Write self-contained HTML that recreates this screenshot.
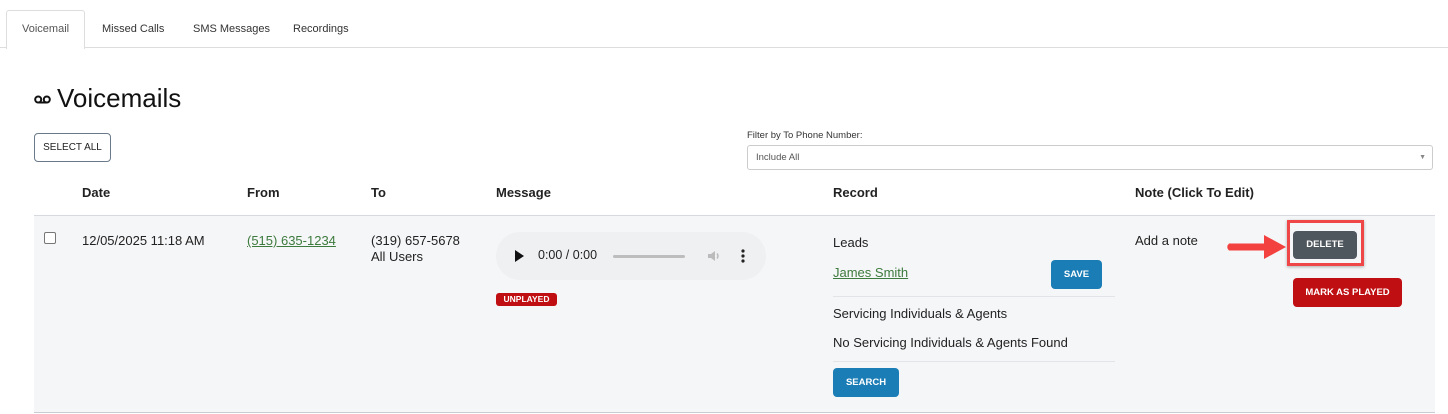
<!DOCTYPE html>
<html><head><style>
body{margin:0;width:1448px;height:414px;background:#fff;font-family:"Liberation Sans",sans-serif;color:#222;position:relative;overflow:hidden}
.a{position:absolute;white-space:nowrap}
.tab{font-size:11px;top:23px;color:#333}
.btn{position:absolute;border-radius:4px;color:#fff;font-weight:bold;font-size:9.5px;text-align:center}
.th{top:185px;font-size:13px;font-weight:bold;color:#222}
.td{font-size:13px;color:#222}
</style></head><body>
<div class="a" style="left:6px;top:10px;width:77px;height:38px;border:1px solid #ddd;border-bottom:none;border-radius:3px 3px 0 0;background:#fff"></div>
<div class="a" style="left:84px;top:47px;width:1364px;border-top:1px solid #ddd"></div>
<div class="a" style="left:0;top:47px;width:6px;border-top:1px solid #ddd"></div>
<div class="a tab" style="left:22px;color:#555">Voicemail</div>
<div class="a tab" style="left:102px">Missed Calls</div>
<div class="a tab" style="left:193px">SMS Messages</div>
<div class="a tab" style="left:293px">Recordings</div>

<svg class="a" style="left:34px;top:95px" width="17" height="9" viewBox="0 0 17 9"><circle cx="4.2" cy="4.5" r="3" fill="none" stroke="#111" stroke-width="2"/><circle cx="12.8" cy="4.5" r="3" fill="none" stroke="#111" stroke-width="2"/><line x1="4.2" y1="7.5" x2="12.8" y2="7.5" stroke="#111" stroke-width="2"/></svg>
<div class="a" style="left:57px;top:83px;font-size:26px;color:#111">Voicemails</div>

<div class="a" style="left:34px;top:133px;width:75px;height:27px;border:1px solid #6a7a8a;border-radius:4px;font-size:10px;line-height:27px;text-align:center;color:#222">SELECT ALL</div>

<div class="a" style="left:747px;top:130px;font-size:9.5px;color:#333">Filter by To Phone Number:</div>
<div class="a" style="left:747px;top:145px;width:684px;height:23px;border:1px solid #ccc;border-radius:3px;font-size:9.5px;line-height:23px;color:#555"><span style="margin-left:8px">Include All</span><span style="position:absolute;right:6px;font-size:7px;color:#888">▼</span></div>

<div class="a th" style="left:82px">Date</div>
<div class="a th" style="left:247px">From</div>
<div class="a th" style="left:371px">To</div>
<div class="a th" style="left:496px">Message</div>
<div class="a th" style="left:833px">Record</div>
<div class="a th" style="left:1135px">Note (Click To Edit)</div>

<div class="a" style="left:34px;top:215px;width:1401px;height:196px;background:#f5f6f8;border-top:1px solid #d6d9de;border-bottom:1px solid #c9ccd2"></div>
<div class="a" style="left:44px;top:232px;width:10px;height:10px;border:1px solid #777;border-radius:2px;background:#fff"></div>
<div class="a td" style="left:82px;top:233px">12/05/2025 11:18 AM</div>
<div class="a td" style="left:247px;top:233px;color:#3d7a3d;text-decoration:underline">(515) 635-1234</div>
<div class="a td" style="left:371px;top:233px;line-height:16px">(319) 657-5678<br>All Users</div>

<div class="a" style="left:496px;top:232px;width:270px;height:48px;border-radius:24px;background:#eff0f2"></div>
<svg class="a" style="left:515px;top:250px" width="10" height="12"><path d="M0 0L9 6L0 12Z" fill="#111"/></svg>
<div class="a" style="left:538px;top:248px;font-size:12.5px;color:#222">0:00 / 0:00</div>
<div class="a" style="left:613px;top:255px;width:72px;height:3px;background:#bdbdbd;border-radius:2px"></div>
<svg class="a" style="left:707px;top:249px" width="14" height="14" viewBox="0 0 14 14"><path d="M1 5h3l4-3v10l-4-3H1z" fill="#bbb"/><path d="M10 4.5q2 2.5 0 5" stroke="#bbb" stroke-width="1.5" fill="none"/></svg>
<svg class="a" style="left:741px;top:249px" width="4" height="14"><circle cx="2" cy="2" r="1.6" fill="#222"/><circle cx="2" cy="7" r="1.6" fill="#222"/><circle cx="2" cy="12" r="1.6" fill="#222"/></svg>
<div class="a" style="left:496px;top:293px;width:61px;height:13px;background:#c00f12;border-radius:3px;color:#fff;font-size:8.5px;font-weight:bold;line-height:13px;text-align:center">UNPLAYED</div>

<div class="a td" style="left:833px;top:235px">Leads</div>
<div class="a td" style="left:833px;top:265px;color:#3d7a3d;text-decoration:underline">James Smith</div>
<div class="btn" style="left:1051px;top:260px;width:51px;height:29px;line-height:29px;background:#1b7db5">SAVE</div>
<div class="a" style="left:833px;top:296px;width:282px;border-top:1px solid #e2e4e8"></div>
<div class="a td" style="left:833px;top:306px">Servicing Individuals &amp; Agents</div>
<div class="a td" style="left:833px;top:335px">No Servicing Individuals &amp; Agents Found</div>
<div class="a" style="left:833px;top:361px;width:282px;border-top:1px solid #e2e4e8"></div>
<div class="btn" style="left:833px;top:368px;width:66px;height:29px;line-height:29px;background:#1b7db5">SEARCH</div>

<div class="a td" style="left:1135px;top:233px">Add a note</div>
<svg class="a" style="left:1224px;top:230px" width="64" height="34" viewBox="0 0 64 34" style="filter:drop-shadow(0 1px 1px rgba(0,0,0,.3))"><path d="M5 13.5H40V5L62 17L40 29V20.5H5Q1.5 17 5 13.5Z" fill="#f2413f"/></svg>
<div class="a" style="left:1287px;top:220px;width:77px;height:46px;border:3px solid #ef4648;box-sizing:border-box;box-shadow:0 1px 3px rgba(0,0,0,.3)"></div>
<div class="btn" style="left:1293px;top:231px;width:64px;height:28px;line-height:28px;background:#4f575e">DELETE</div>
<div class="btn" style="left:1293px;top:278px;width:109px;height:29px;line-height:29px;background:#c00f12">MARK AS PLAYED</div>
</body></html>
